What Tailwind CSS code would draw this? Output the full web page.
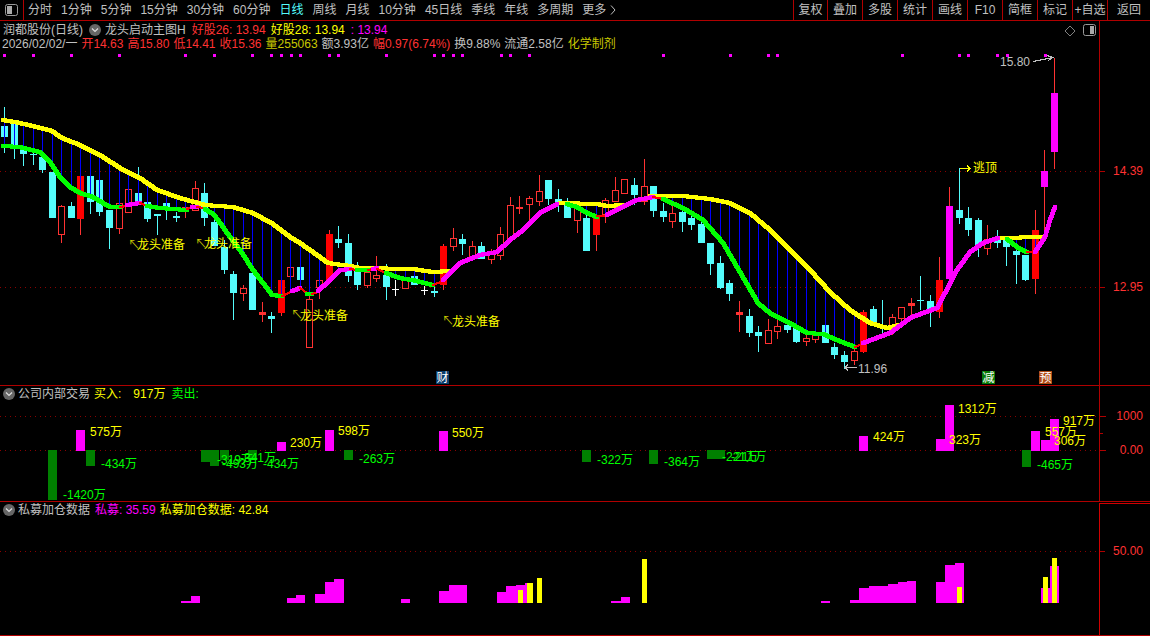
<!DOCTYPE html>
<html lang="zh-CN">
<head>
    <meta charset="UTF-8">
    <title>润都股份(日线)</title>
    <script src="https://cdn.jsdelivr.net/npm/@tailwindcss/browser@4"></script>
</head>
<body class="bg-black">
<div class="w-[1150px] h-[636px] overflow-hidden bg-black flex flex-col text-[12px] leading-[14px] text-[#c0c0c0] font-['Liberation_Sans','Noto_Sans_CJK_SC',sans-serif]">

    <!-- toolbar -->
    <div class="h-[21px] shrink-0 flex border-b border-[#b00000]">
        <div class="w-[24px] shrink-0 flex items-center justify-center border-r border-[#b00000]">
            <svg width="13" height="12" viewBox="0 0 13 12"><rect x="0.5" y="0.5" width="12" height="11" rx="2" fill="#000" stroke="#999"/><rect x="2" y="2" width="5" height="8" fill="#aaa"/></svg>
        </div>
        <div class="flex-1 flex items-center gap-[9px] pl-[4px]">
            <span>分时</span><span>1分钟</span><span>5分钟</span><span>15分钟</span><span>30分钟</span><span>60分钟</span>
            <span class="text-[#54fcfc]">日线</span><span>周线</span><span>月线</span><span>10分钟</span><span>45日线</span><span>季线</span><span>年线</span><span>多周期</span>
            <span class="flex items-center gap-[4px]">更多<svg width="6" height="10" viewBox="0 0 6 10"><path d="M1 0.5 L5 5 L1 9.5" fill="none" stroke="#c0c0c0"/></svg></span>
        </div>
        <div class="flex shrink-0">
            <div class="w-[34px] flex items-center justify-center border-l border-[#b00000]">复权</div>
            <div class="w-[35px] flex items-center justify-center border-l border-[#b00000]">叠加</div>
            <div class="w-[35px] flex items-center justify-center border-l border-[#b00000]">多股</div>
            <div class="w-[35px] flex items-center justify-center border-l border-[#b00000]">统计</div>
            <div class="w-[35px] flex items-center justify-center border-l border-[#b00000]">画线</div>
            <div class="w-[35px] flex items-center justify-center border-l border-[#b00000]">F10</div>
            <div class="w-[35px] flex items-center justify-center border-l border-[#b00000]">简框</div>
            <div class="w-[35px] flex items-center justify-center border-l border-[#b00000]">标记</div>
            <div class="w-[35px] flex items-center justify-center border-l border-[#b00000] whitespace-nowrap">+自选</div>
            <div class="w-[43px] flex items-center justify-center border-l border-[#b00000]">返回</div>
        </div>
    </div>

    <!-- main chart pane -->
    <div class="h-[365px] shrink-0 flex border-b border-[#b00000]">
        <div class="relative flex-1">
            <svg id="mainChart" class="absolute inset-0" width="1099" height="364" viewBox="0 21 1099 364"></svg>
            <div class="relative flex items-center h-[14px] mt-[2px] pl-[3px] whitespace-nowrap">
                <span>润都股份(日线)</span>
                <svg class="ml-[6px]" width="12" height="12" viewBox="0 0 12 12"><circle cx="6" cy="6" r="6" fill="#666"/><path d="M3 4.5 L6 7.5 L9 4.5" fill="none" stroke="#ddd" stroke-width="1.2"/></svg>
                <span class="ml-[4px]">龙头启动主图H</span>
                <span class="ml-[6px] text-[#ff3232]">好股26: 13.94</span>
                <span class="ml-[5px] text-[#ffff00]">好股28: 13.94</span>
                <span class="ml-[6px] text-[#ff00ff]">: 13.94</span>
                <svg class="absolute left-[1064px] top-[2px]" width="12" height="12" viewBox="0 0 12 12"><path d="M6 1 L11 6 L6 11 L1 6 Z" fill="none" stroke="#808080"/></svg>
                <svg class="absolute left-[1083px] top-[1px]" width="13" height="12" viewBox="0 0 13 12"><rect x="0.5" y="0.5" width="12" height="11" rx="2" fill="#000" stroke="#999"/><rect x="7" y="2" width="4" height="8" fill="#aaa"/></svg>
            </div>
            <div class="relative flex items-center gap-1 h-[14px] pl-[2px] whitespace-nowrap">
                <span>2026/02/02/一</span>
                <span class="text-[#ff3232]">开14.63</span>
                <span class="text-[#ff3232]">高15.80</span>
                <span class="text-[#ff3232]">低14.41</span>
                <span class="text-[#ff3232]">收15.36</span>
                <span class="text-[#c8c800]">量255063</span>
                <span>额3.93亿</span>
                <span class="text-[#ff3232]">幅0.97(6.74%)</span>
                <span>换9.88%</span>
                <span>流通2.58亿</span>
                <span class="text-[#c8c800]">化学制剂</span>
            </div>
        </div>
        <div class="relative w-[51px] shrink-0 border-l border-[#b00000]">
            <svg class="absolute inset-0" width="50" height="364" viewBox="1100 21 50 364">
                <path d="M1100 171.5h5M1100 287.5h5" stroke="#b00000"/>
                <text x="1143" y="171" text-anchor="end" dominant-baseline="central" fill="#ff3232">14.39</text>
                <text x="1143" y="287" text-anchor="end" dominant-baseline="central" fill="#ff3232">12.95</text>
            </svg>
        </div>
    </div>

    <!-- insider trades pane -->
    <div class="h-[116px] shrink-0 flex border-b border-[#b00000]">
        <div class="relative flex-1">
            <svg id="tradeChart" class="absolute inset-0" width="1099" height="115" viewBox="0 386 1099 115"></svg>
            <div class="relative flex items-center h-[14px] mt-[1px] pl-[3px] whitespace-nowrap">
                <svg width="12" height="12" viewBox="0 0 12 12"><circle cx="6" cy="6" r="6" fill="#666"/><path d="M3 4.5 L6 7.5 L9 4.5" fill="none" stroke="#ddd" stroke-width="1.2"/></svg>
                <span class="ml-[3px]">公司内部交易</span>
                <span class="ml-[4px] text-[#ffff00]">买入:</span>
                <span class="ml-[12px] text-[#ffff00]">917万</span>
                <span class="ml-[6px] text-[#00ff00]">卖出:</span>
            </div>
        </div>
        <div class="relative w-[51px] shrink-0 border-l border-[#b00000]">
            <svg class="absolute inset-0" width="50" height="115" viewBox="1100 386 50 115">
                <path d="M1100 416.5h6M1100 433.5h3M1100 450.5h6" stroke="#b00000"/>
                <text x="1143" y="416" text-anchor="end" dominant-baseline="central" fill="#ff3232">1000</text>
                <text x="1143" y="450" text-anchor="end" dominant-baseline="central" fill="#ff3232">0.00</text>
            </svg>
        </div>
    </div>

    <!-- private fund pane -->
    <div class="flex-1 flex border-b border-[#b00000]">
        <div class="relative flex-1">
            <svg id="fundChart" class="absolute inset-0" width="1099" height="133" viewBox="0 502 1099 133"></svg>
            <div class="relative flex items-center h-[14px] mt-[1px] pl-[3px] whitespace-nowrap">
                <svg width="12" height="12" viewBox="0 0 12 12"><circle cx="6" cy="6" r="6" fill="#666"/><path d="M3 4.5 L6 7.5 L9 4.5" fill="none" stroke="#ddd" stroke-width="1.2"/></svg>
                <span class="ml-[3px]">私募加仓数据</span>
                <span class="ml-[5px] text-[#ff00ff]">私募: 35.59</span>
                <span class="ml-[4px] text-[#ffff00]">私募加仓数据: 42.84</span>
            </div>
        </div>
        <div class="relative w-[51px] shrink-0 mt-[1px] border-l border-t border-[#d00000]">
            <svg class="absolute inset-0" width="50" height="131" viewBox="1100 504 50 131">
                <path d="M1100 551.5h5" stroke="#b00000"/>
                <text x="1143" y="551" text-anchor="end" dominant-baseline="central" fill="#ff3232">50.00</text>
            </svg>
        </div>
    </div>
</div>

<script>
    // [type, top, bottom, high, low]  c cyan, r hollow red, R solid red, m magenta, w white
    const candles = [
        ['c',126,137,107,153],['c',123,145,123,159],['c',150,154,140,166],['c',154,155,147,165],['c',157,170,150,173],
        ['c',172,218,172,218],['r',206,235,205,243],['c',206,218,202,218],['R',176,219,176,235],['c',176,202,176,214],
        ['c',180,212,180,216],['c',210,228,210,249],['r',203,229,203,234],['r',189,213,189,213],['c',193,203,167,203],
        ['c',202,219,190,222],['c',214,216,214,235],['c',203,208,198,220],['c',216,218,212,222],['r',207,209,205,218],
        ['r',188,211,181,211],['c',193,218,183,226],['c',222,246,205,246],['c',247,270,240,274],['c',274,293,271,320],
        ['r',288,294,285,301],['c',273,310,270,310],['r',312,315,302,322],['c',316,319,312,333],['R',280,313,280,316],
        ['r',267,277,262,277],['c',267,280,264,280],['r',299,348,295,348],['r',280,288,275,299],['R',234,280,230,280],
        ['c',239,243,226,248],['c',243,276,234,282],['c',270,285,262,290],['r',272,286,270,288],['r',275,279,256,282],
        ['c',275,287,264,300],['w',289,290,280,296],['r',280,289,275,289],['c',276,285,270,285],['w',290,291,286,295],
        ['c',291,293,282,297],['R',246,285,244,290],['r',238,247,228,251],['c',239,244,234,255],['r',246,258,241,258],
        ['c',246,259,242,259],['r',254,260,249,264],['r',234,256,227,260],['r',205,240,197,240],['r',207,209,196,214],
        ['r',198,205,196,223],['r',191,202,175,206],['c',180,199,180,205],['c',199,203,189,212],['c',205,218,198,218],
        ['r',206,221,203,233],['c',218,251,205,251],['R',217,235,217,251],['r',200,215,198,223],['r',190,202,177,202],
        ['r',179,194,179,194],['c',185,195,178,205],['r',186,202,159,205],['c',186,211,186,217],['c',211,217,203,222],
        ['r',213,222,200,228],['c',212,222,205,232],['c',218,225,210,230],['c',224,243,220,243],['c',243,264,243,275],
        ['c',263,288,256,289],['c',283,294,280,301],['r',312,315,301,332],['c',316,333,309,337],['c',332,336,326,352],
        ['r',330,344,319,344],['r',326,332,320,339],['c',325,330,320,333],['c',326,342,322,343],['r',338,342,334,346],
        ['r',335,340,330,343],['c',325,343,323,343],['c',347,355,343,359],['c',355,362,351,369],['r',351,361,348,365],
        ['R',312,352,310,353],['c',309,326,306,326],['c',325,328,300,335],['r',317,326,314,335],['r',307,319,307,325],
        ['r',303,306,298,315],['c',300,301,276,310],['c',301,310,295,327],['R',280,312,257,318],['m',206,279,187,279],
        ['c',210,218,168,224],['c',218,230,207,236],['c',220,247,218,257],['r',239,249,225,255],['c',239,243,230,248],
        ['c',238,247,238,266],['c',251,255,240,284],['c',255,280,255,281],['R',230,279,210,294],['m',171,187,150,235],
        ['m',93,152,58,169]
    ];

    const yellowSegs = [
        [[3,120],[15,122],[33,126],[52,131],[62,138],[80,145],[100,155],[120,168],[140,178],[157,190],[180,198],[205,205],[233,207],[253,213],[273,224],[290,237],[300,243],[317,255],[328,263],[350,266],[360,268],[413,269],[433,272],[450,271]],
        [[560,203],[597,204],[607,206],[623,205]],
        [[650,196],[683,196],[710,199],[730,203],[750,213],[770,230],[790,250],[810,270],[830,292],[850,310],[870,323],[887,328],[900,325]],
        [[998,238],[1043,237]]
    ];

    // g green, m magenta, t thin red joint
    const lowerSegs = [
        ['g',[[3,146],[20,147],[27,149],[40,152],[50,162],[60,177],[70,187],[80,193],[93,197],[103,203],[110,207],[120,207]]],
        ['t',[[120,207],[127,206]]],
        ['m',[[127,205],[140,203]]],
        ['t',[[140,203],[147,206]]],
        ['g',[[147,206],[160,208],[173,209],[187,210]]],
        ['t',[[187,209],[192,207]]],
        ['m',[[192,207],[197,207]]],
        ['t',[[197,207],[205,208]]],
        ['g',[[205,209],[213,214],[218,220],[230,237],[240,250],[253,270],[263,283],[272,295],[282,296]]],
        ['t',[[282,296],[292,291]]],
        ['m',[[292,291],[300,288]]],
        ['t',[[300,288],[307,293]]],
        ['g',[[307,294],[312,294]]],
        ['t',[[312,294],[318,292]]],
        ['m',[[318,291],[330,280],[340,270],[350,269]]],
        ['t',[[350,269],[357,270]]],
        ['g',[[357,270],[368,270]]],
        ['t',[[368,270],[373,269]]],
        ['m',[[373,269],[377,268]]],
        ['t',[[377,269],[386,273]]],
        ['g',[[386,273],[400,278],[417,281],[433,285]]],
        ['t',[[433,285],[443,281]]],
        ['m',[[443,280],[460,263],[480,255],[497,252],[510,240],[523,230],[540,213],[557,204]]],
        ['g',[[567,204],[577,207],[587,213],[597,217]]],
        ['t',[[597,216],[607,216]]],
        ['m',[[607,215],[620,208],[637,200],[653,197]]],
        ['t',[[653,197],[663,199]]],
        ['g',[[663,199],[683,208],[703,220],[723,243],[740,272],[758,303],[770,313],[790,323],[807,333],[823,334],[837,340],[855,347]]],
        ['t',[[855,347],[863,343]]],
        ['m',[[863,343],[890,333],[910,318],[923,313],[937,308],[945,293],[957,270],[970,252],[983,243],[998,238]]],
        ['g',[[1007,239],[1017,247],[1027,252]]],
        ['t',[[1027,252],[1035,252]]],
        ['m',[[1035,252],[1045,237],[1050,220],[1055,207]]]
    ];

    const blueIdx = [];
    [[0,33],[35,36],[41,45],[61,64],[69,89],[106,108]].forEach(function (r) {
        for (let i = r[0]; i <= r[1]; i++) blueIdx.push(i);
    });

    const topDots = [3,32,70,118,184,213,251,270,280,290,299,328,337,385,433,442,452,461,500,509,528,662,729,767,776,901,958,967,996,1006,1044];

    const chartNotes = [
        ['↖',128,245,'#c8c800'],['龙头准备',137,245,'#ffff00'],
        ['↖',195,244,'#c8c800'],['龙头准备',204,244,'#ffff00'],
        ['↖',291,315,'#c8c800'],['龙头准备',300,316,'#ffff00'],
        ['↖',442,321,'#c8c800'],['龙头准备',452,322,'#ffff00'],
        ['逃顶',973,168,'#ffff00'],['15.80',1000,62,'#c0c0c0'],['11.96',858,369,'#c0c0c0']
    ];

    const tradeBars = [
        [48,57,450,500,'g'],[76,85,430,451,'m'],[86,95,450,466,'g'],[201,210,450,462,'g'],[210,219,450,466,'g'],[220,229,450,460,'g'],
        [248,257,450,460,'g'],[277,286,442,451,'m'],[325,334,430,451,'m'],[344,353,450,460,'g'],[439,448,431,451,'m'],[582,591,450,462,'g'],
        [649,658,450,464,'g'],[707,725,450,459,'g'],[859,868,436,451,'m'],[936,945,439,451,'m'],[945,954,405,451,'m'],[1022,1031,450,467,'g'],
        [1031,1040,431,451,'m'],[1041,1050,440,451,'m'],[1050,1059,419,451,'m']
    ];

    const tradeLabels = [
        ['575万',90,432,'y'],['-434万',101,464,'g'],['-1420万',63,495,'g'],['-319万',217,460,'g'],['-493万',222,464,'g'],['-341万',240,458,'g'],
        ['-434万',263,464,'g'],['230万',290,443,'y'],['598万',338,431,'y'],['-263万',359,459,'g'],['550万',452,433,'y'],['-322万',597,460,'g'],
        ['-364万',664,462,'g'],['-221万',722,457,'g'],['-211万',731,457,'g'],['424万',873,437,'y'],['1312万',958,409,'y'],['323万',949,440,'y'],
        ['557万',1045,432,'y'],['306万',1054,441,'y'],['917万',1063,421,'y'],['-465万',1037,465,'g']
    ];

    const fundMagenta = [
        [181,191,601],[191,200,596],[287,296,598],[296,305,595],[315,325,594],[325,334,582],[334,344,579],[401,410,599],[439,449,591],[449,467,585],
        [497,506,592],[506,516,586],[516,525,585],[525,533,583],[611,621,601],[621,630,597],[821,830,601],[850,859,600],[859,869,588],[869,888,586],
        [888,898,584],[898,907,582],[907,916,581],[936,945,582],[945,955,565],[955,964,563],[1041,1050,588],[1050,1059,566]
    ];
    const fundYellow = [[518,523,590],[527,533,583],[537,542,578],[642,647,559],[957,962,587],[1043,1048,577],[1052,1057,558]];

    const COLORS = { g: '#00ff00', m: '#ff00ff', t: '#ff0000' };
    const lowerPts = [];
    lowerSegs.forEach(function (s) { s[1].forEach(function (p) { lowerPts.push(p); }); });

    function yAt(pts, x) {
        for (let i = 1; i < pts.length; i++) {
            if (x <= pts[i][0]) {
                const a = pts[i - 1], b = pts[i];
                const t = b[0] === a[0] ? 0 : (x - a[0]) / (b[0] - a[0]);
                return a[1] + (b[1] - a[1]) * t;
            }
        }
        return pts[pts.length - 1][1];
    }

    function rect(x, y, w, h, fill) {
        return `<rect x="${x}" y="${y}" width="${w}" height="${h}" fill="${fill}"/>`;
    }
    function dotted(y, w) {
        return `<line x1="0" x2="${w}" y1="${y + 0.5}" y2="${y + 0.5}" stroke="#8a0000" stroke-dasharray="1 4"/>`;
    }
    // square pen, gives the stair-stepped thick line of the terminal
    function brush(pts, color, size) {
        let d = '';
        for (let i = 1; i < pts.length; i++) {
            const a = pts[i - 1], b = pts[i];
            const steps = Math.max(Math.abs(b[0] - a[0]), Math.abs(b[1] - a[1]), 1);
            for (let k = 0; k <= steps; k++) {
                const x = Math.round(a[0] + (b[0] - a[0]) * k / steps) - size / 2;
                const y = Math.round(a[1] + (b[1] - a[1]) * k / steps) - size / 2;
                d += `M${x} ${y}h${size}v${size}h-${size}z`;
            }
        }
        return `<path d="${d}" fill="${color}"/>`;
    }
    function label(t, x, y, color) {
        return `<text x="${x}" y="${y}" dominant-baseline="central" fill="${color}">${t}</text>`;
    }

    // main pane
    let out = '<g shape-rendering="crispEdges">' + dotted(171, 1099) + dotted(287, 1099);
    topDots.forEach(function (x) { out += rect(x, 54, 3, 3, '#ff00ff'); });

    candles.forEach(function (c, i) {
        const left = Math.round(1 + 9.545 * i), wick = left + 3;
        const type = c[0], top = c[1], bottom = c[2], high = c[3], low = c[4];
        const bodyColor = { c: '#54fcfc', r: '#ff3232', R: '#ff0000', m: '#ff00ff', w: '#ffffff' }[type];
        const wickColor = type === 'R' || type === 'm' ? '#ff3232' : bodyColor;
        out += rect(wick, high, 1, low - high, wickColor);
        if (type === 'r' && bottom - top > 3) {
            out += rect(left, top, 7, bottom - top, bodyColor) + rect(left + 1, top + 1, 5, bottom - top - 2, '#000');
        } else {
            out += rect(left, top, 7, Math.max(bottom - top, 1), bodyColor);
        }
    });

    blueIdx.forEach(function (i) {
        const wick = Math.round(1 + 9.545 * i) + 3;
        const top = yAt([[0, 120]].concat(yellowSegs[0], yellowSegs[1], yellowSegs[2], [[950, 240]], yellowSegs[3]), wick);
        out += rect(wick, Math.round(top), 1, Math.round(yAt(lowerPts, wick) - top), '#0000ff');
    });

    yellowSegs.forEach(function (s) { out += brush(s, '#ffff00', 4); });
    lowerSegs.forEach(function (s) { out += brush(s[1], COLORS[s[0]], s[0] === 't' ? 2 : 4); });

    // price arrows
    out += '<path d="M1033 61.5 L1053 57.5 M1047 55.5 L1053 57.5 L1048 60.5" fill="none" stroke="#c0c0c0"/>';
    out += '<path d="M845 367.5 H857 M848 364.5 L845 367.5 L848 370.5" fill="none" stroke="#c0c0c0"/>';
    out += '<path d="M960 168.5 H970 M967 165.5 L970 168.5 L967 171.5" fill="none" stroke="#ffff00"/>';
    out += '</g>';

    chartNotes.forEach(function (n) { out += label(n[0], n[1], n[2], n[3]); });

    // markers at the foot of the main pane
    [[436, '财', '#0a3d6b'], [982, '减', '#087a08'], [1039, '预', '#b04a14']].forEach(function (m) {
        out += rect(m[0], 371, 13, 13, m[2]) + label(m[1], m[0] + 0.5, 378, '#ffffff');
    });
    document.getElementById('mainChart').innerHTML = out;

    // insider trades pane
    out = '<g shape-rendering="crispEdges">' + dotted(416, 1099) + dotted(450, 1099);
    tradeBars.forEach(function (b) { out += rect(b[0], b[2], b[1] - b[0], b[3] - b[2], b[4] === 'g' ? '#008000' : '#ff00ff'); });
    out += '</g>';
    tradeLabels.forEach(function (l) { out += label(l[0], l[1], l[2], l[3] === 'g' ? '#00ff00' : '#ffff00'); });
    document.getElementById('tradeChart').innerHTML = out;

    // private fund pane
    out = '<g shape-rendering="crispEdges">' + dotted(551, 1099);
    fundMagenta.forEach(function (b) { out += rect(b[0], b[2], b[1] - b[0], 603 - b[2], '#ff00ff'); });
    fundYellow.forEach(function (b) { out += rect(b[0], b[2], b[1] - b[0], 603 - b[2], '#ffff00'); });
    out += '</g>';
    document.getElementById('fundChart').innerHTML = out;
</script>
</body>
</html>
